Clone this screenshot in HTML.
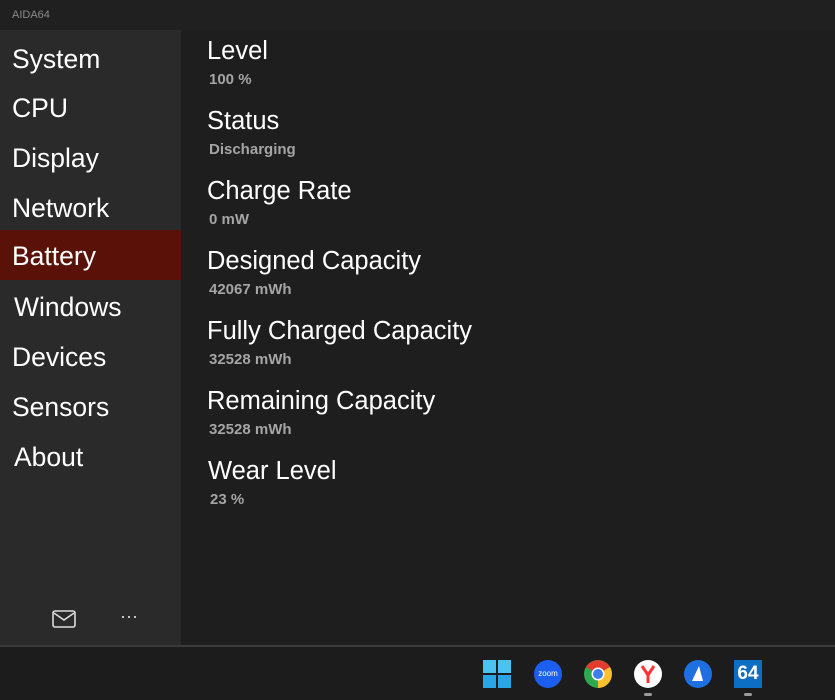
<!DOCTYPE html>
<html><head><style>
*{margin:0;padding:0;box-sizing:border-box}
body{width:835px;height:700px;background:#1f1f1f;font-family:"Liberation Sans",sans-serif;overflow:hidden;position:relative;color:#fff}
.tb{position:absolute;left:0;top:0;width:835px;height:30px;background:#202020;color:#8a8a8a;font-size:11px;padding:9px 0 0 12px}
.side{position:absolute;left:0;top:30px;width:181px;height:615px;background:#2a2a2a}
.nav{position:absolute;left:0;width:181px;height:50px;font-size:26.5px;padding-left:12px;line-height:52px;color:#fff}
.sel{background:#5a1208}
.main{position:absolute;left:181px;top:30px;width:654px;height:615px;background:#1e1e1e}
.it{position:absolute;left:26px}
.t{font-size:25.5px;color:#fff;line-height:32px}
.v{font-size:15px;font-weight:bold;color:#a5a5a5;margin-top:4px;margin-left:2px}
.task{position:absolute;left:0;top:645px;width:835px;height:55px;background:#1c1c1c;border-top:2px solid #3a3a3a}
.ic{position:absolute;top:13px;width:28px;height:28px}
</style></head><body>
<div class="tb">AIDA64</div>
<div class="side">
<div class="nav" style="top:3px">System</div>
<div class="nav" style="top:52px">CPU</div>
<div class="nav" style="top:102px">Display</div>
<div class="nav" style="top:152px">Network</div>
<div class="nav sel" style="top:200px">Battery</div>
<div class="nav" style="top:251px;padding-left:14px">Windows</div>
<div class="nav" style="top:301px">Devices</div>
<div class="nav" style="top:351px">Sensors</div>
<div class="nav" style="top:401px;padding-left:14px">About</div>
<svg style="position:absolute;left:52px;top:580px" width="24" height="18" viewBox="0 0 24 18"><rect x="1" y="1" width="22" height="16" rx="2" fill="none" stroke="#ddd" stroke-width="1.6"/><path d="M2 3l10 7 10-7" fill="none" stroke="#ddd" stroke-width="1.6"/></svg>
<div style="position:absolute;left:120px;top:576px;color:#ddd;font-size:18px">···</div>
</div>
<div class="main">
<div class="it" style="top:5px"><div class="t">Level</div><div class="v">100 %</div></div>
<div class="it" style="top:75px"><div class="t">Status</div><div class="v">Discharging</div></div>
<div class="it" style="top:145px"><div class="t">Charge Rate</div><div class="v">0 mW</div></div>
<div class="it" style="top:215px"><div class="t">Designed Capacity</div><div class="v">42067 mWh</div></div>
<div class="it" style="top:285px"><div class="t">Fully Charged Capacity</div><div class="v">32528 mWh</div></div>
<div class="it" style="top:355px"><div class="t">Remaining Capacity</div><div class="v">32528 mWh</div></div>
<div class="it" style="top:425px;left:27px"><div class="t">Wear Level</div><div class="v">23 %</div></div>
</div>
<div class="task">
<svg class="ic" style="left:483px" viewBox="0 0 28 28"><rect x="0" y="0" width="13" height="13" fill="#4cc2f1"/><rect x="15" y="0" width="13" height="13" fill="#4cc2f1"/><rect x="0" y="15" width="13" height="13" fill="#2aa5e6"/><rect x="15" y="15" width="13" height="13" fill="#2aa5e6"/></svg>
<div class="ic" style="left:534px;border-radius:50%;background:#1c5ff0;color:#fff;font-size:8px;text-align:center;line-height:28px">zoom</div>
<svg class="ic" style="left:584px" viewBox="0 0 28 28"><circle cx="14" cy="14" r="14" fill="#2da94f"/><path d="M14 14L2 7A14 14 0 0 1 26 7Z" fill="#e33b2e"/><path d="M14 14L26 7A14 14 0 0 1 14 28Z" fill="#fbc02d"/><circle cx="14" cy="14" r="6.5" fill="#fff"/><circle cx="14" cy="14" r="5" fill="#3f7ee8"/></svg>
<svg class="ic" style="left:634px" viewBox="0 0 28 28"><circle cx="14" cy="14" r="14" fill="#fff"/><path d="M8 6l6 9 6-9M14 15v8" stroke="#f33" stroke-width="3" fill="none"/></svg>
<div style="position:absolute;left:644px;top:46px;width:8px;height:3px;background:#999;border-radius:2px"></div>
<svg class="ic" style="left:684px" viewBox="0 0 28 28"><circle cx="14" cy="14" r="14" fill="#1e6fe0"/><path d="M15 6L8 21h11z" fill="#fff"/></svg>
<div class="ic" style="left:734px;background:#0d6fc4;color:#fff;font-weight:bold;font-size:19px;text-align:center;line-height:28px">64</div>
<div style="position:absolute;left:744px;top:46px;width:8px;height:3px;background:#999;border-radius:2px"></div>
</div>
</body></html>
